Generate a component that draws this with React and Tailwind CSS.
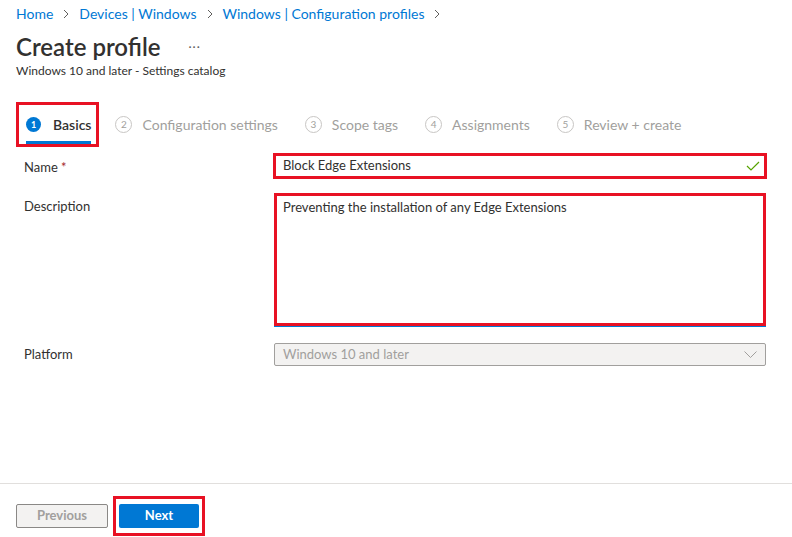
import React from 'react';

const font = { fontFamily: '"Segoe UI", Lato, "Open Sans", sans-serif' };

function Chevron() {
  return (
    <svg width="8" height="10" viewBox="0 0 8 10" className="mx-[9px]">
      <path d="M2 1l4 4-4 4" fill="none" stroke="#605e5c" strokeWidth="1" />
    </svg>
  );
}

function StepCircle({ n, active }) {
  if (active) {
    return (
      <span className="flex h-[15px] w-[15px] items-center justify-center rounded-full bg-[#0078d4] text-[9px] font-bold text-white">
        {n}
      </span>
    );
  }
  return (
    <span className="flex h-[17px] w-[17px] items-center justify-center rounded-full border border-[#c8c6c4] text-[10px] text-[#a19f9d]">
      {n}
    </span>
  );
}

const steps = [
  { n: 2, label: 'Configuration settings' },
  { n: 3, label: 'Scope tags' },
  { n: 4, label: 'Assignments' },
  { n: 5, label: 'Review + create' },
];

export default function App() {
  return (
    <div className="flex h-[537px] w-[792px] flex-col bg-white text-[#323130]" style={font}>
      <div className="flex-1 pl-4 pr-[26px]">
        <div className="flex h-[27px] items-center text-[14px] text-[#0078d4]">
          <span>Home</span>
          <Chevron />
          <span>Devices | Windows</span>
          <Chevron />
          <span>Windows | Configuration profiles</span>
          <Chevron />
        </div>

        <div className="mt-[4px] flex items-center">
          <h1 className="text-[24px] font-semibold leading-[32px] text-[#323130]">Create profile</h1>
          <span className="ml-[28px] text-[12px] tracking-[1px] text-[#605e5c]">···</span>
        </div>
        <div className="text-[12px] leading-[16px] text-[#323130]">Windows 10 and later - Settings catalog</div>

        <div className="mt-[23px] flex h-[45px] items-stretch">
          <div className="flex border-[3px] border-[#e81123] pl-[7px] pr-[5px]">
            <div className="flex items-center gap-[12px] border-b-[3px] border-[#0078d4] pt-[3px]">
              <StepCircle n={1} active />
              <span className="text-[14px] font-semibold text-[#323130]">Basics</span>
            </div>
          </div>
          <div className="ml-[16px] flex items-center gap-[27px]">
            {steps.map((s) => (
              <div key={s.n} className="flex items-center gap-[10px]">
                <StepCircle n={s.n} />
                <span className="text-[14px] text-[#a19f9d]">{s.label}</span>
              </div>
            ))}
          </div>
        </div>

        <div className="mt-[6px] flex items-start">
          <div className="w-[257px] pl-[8px] pt-[5px] text-[13px]">
            Name <span className="text-[#a4262c]">*</span>
          </div>
          <div className="-mr-[1px] flex h-[26px] flex-1 items-center justify-between border-[3px] border-[#e81123] pl-[7px] pr-[4px] text-[13px]">
            <span>Block Edge Extensions</span>
            <svg width="14" height="10" viewBox="0 0 14 10">
              <path d="M1 5l4 4 8-8" fill="none" stroke="#57a300" strokeWidth="1.2" />
            </svg>
          </div>
        </div>

        <div className="mt-[14px] flex items-start">
          <div className="w-[258px] pl-[8px] pt-[4px] text-[13px]">Description</div>
          <div className="flex-1 border-b border-[#0078d4]">
            <div className="h-[133px] border-[3px] border-[#e81123] px-[6px] pt-[2px] text-[13px]">
              Preventing the installation of any Edge Extensions
            </div>
          </div>
        </div>

        <div className="mt-[16px] flex items-center">
          <div className="w-[258px] pl-[8px] text-[13px]">Platform</div>
          <div className="flex h-[23px] flex-1 items-center justify-between rounded-[2px] border border-[#a19f9d] bg-[#f3f2f1] pl-[8px] pr-[8px] text-[13px] text-[#a19f9d]">
            <span>Windows 10 and later</span>
            <svg width="13" height="8" viewBox="0 0 13 8">
              <path d="M0.5 0.5l6 6 6-6" fill="none" stroke="#a19f9d" strokeWidth="1" />
            </svg>
          </div>
        </div>
      </div>

      <div className="flex h-[54px] items-start border-t border-[#e1dfdd] pl-4 pt-[12px]">
        <button className="mt-[8px] h-[24px] w-[92px] rounded-[2px] border border-[#8a8886] bg-[#f3f2f1] text-[13px] font-bold text-[#a19f9d]">
          Previous
        </button>
        <div className="ml-[5px] border-[3px] border-[#e81123] px-[3px] py-[5px]">
          <button className="block h-[24px] w-[80px] rounded-[2px] bg-[#0078d4] text-[13px] font-bold text-white">
            Next
          </button>
        </div>
      </div>
    </div>
  );
}
